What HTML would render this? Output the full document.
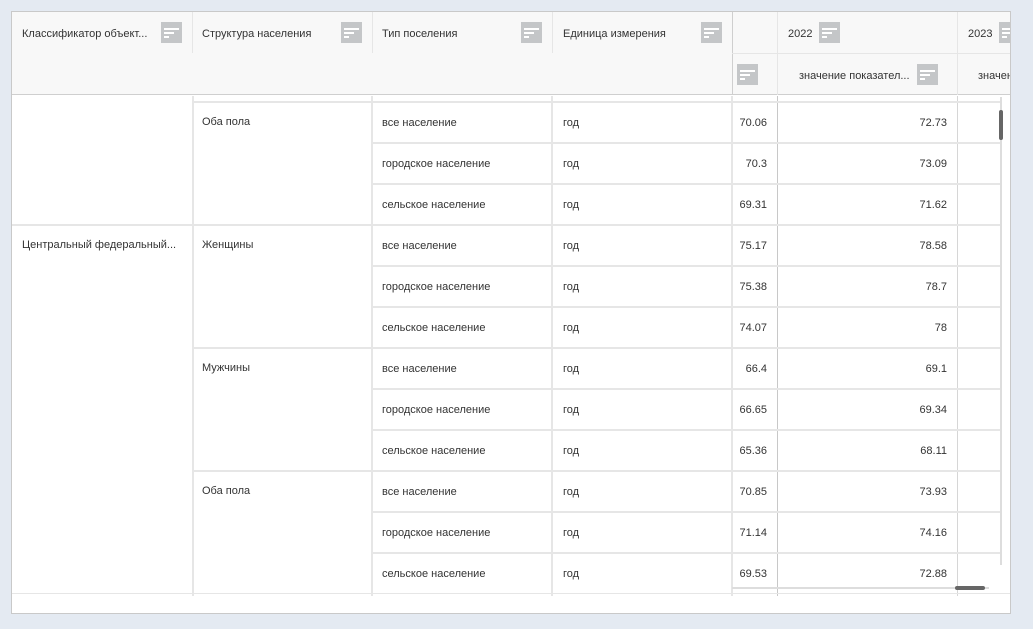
<!DOCTYPE html>
<html><head><meta charset="utf-8"><style>
*{margin:0;padding:0;box-sizing:border-box}
body{width:1033px;height:629px;background:#e4eaf2;position:relative;overflow:hidden;font-family:"Liberation Sans",Arial,sans-serif;font-size:11px;color:#333}
.a{position:absolute}
.panel{left:11px;top:11px;width:1000px;height:603px;background:#fff;border:1px solid #c9c9c9}
.hdr{left:12px;top:12px;width:998px;height:83px;background:#f8f8f8;border-bottom:1px solid #cfcfcf}
.h{position:absolute;height:1px;background:#e6e6e6}
.v{position:absolute;width:1px;background:#e6e6e6}
.ic{position:absolute;width:21px;height:21px;background:#c4c6c8}
.ic i{position:absolute;left:3px;height:2px;background:#fff}
.t{position:absolute;white-space:nowrap;line-height:13px;margin-top:1px}
.r{text-align:right}
</style></head><body>
<div class="a panel"></div>
<div class="a hdr"></div>
<div class="v" style="left:192px;top:12px;height:41px"></div>
<div class="v" style="left:372px;top:12px;height:41px"></div>
<div class="v" style="left:552px;top:12px;height:41px"></div>
<div class="v" style="left:732px;top:12px;height:83px;background:#cfcfcf"></div>
<div class="v" style="left:777px;top:12px;height:83px"></div>
<div class="v" style="left:957px;top:12px;height:83px"></div>
<div class="h" style="left:732px;top:53px;width:278px"></div>
<div class="t" style="left:22px;top:27px">Классификатор объект...</div>
<div class="t" style="left:202px;top:27px">Структура населения</div>
<div class="t" style="left:382px;top:27px">Тип поселения</div>
<div class="t" style="left:563px;top:27px">Единица измерения</div>
<div class="t" style="left:788px;top:27px">2022</div>
<div class="t" style="left:968px;top:27px">2023</div>
<div class="t" style="left:799px;top:69px">значение показател...</div>
<div class="t" style="left:978px;top:69px;width:32px;overflow:hidden">значение</div>
<div class="ic" style="left:161px;top:22px"><i style="top:6px;width:15px"></i><i style="top:10px;width:10px"></i><i style="top:14px;width:5px"></i></div>
<div class="ic" style="left:341px;top:22px"><i style="top:6px;width:15px"></i><i style="top:10px;width:10px"></i><i style="top:14px;width:5px"></i></div>
<div class="ic" style="left:521px;top:22px"><i style="top:6px;width:15px"></i><i style="top:10px;width:10px"></i><i style="top:14px;width:5px"></i></div>
<div class="ic" style="left:701px;top:22px"><i style="top:6px;width:15px"></i><i style="top:10px;width:10px"></i><i style="top:14px;width:5px"></i></div>
<div class="ic" style="left:819px;top:22px"><i style="top:6px;width:15px"></i><i style="top:10px;width:10px"></i><i style="top:14px;width:5px"></i></div>
<div class="ic" style="left:999px;top:22px;width:11px"><i style="top:6px;width:8px"></i><i style="top:10px;width:8px"></i><i style="top:14px;width:5px"></i></div>
<div class="ic" style="left:737px;top:64px"><i style="top:6px;width:15px"></i><i style="top:10px;width:10px"></i><i style="top:14px;width:5px"></i></div>
<div class="ic" style="left:917px;top:64px"><i style="top:6px;width:15px"></i><i style="top:10px;width:10px"></i><i style="top:14px;width:5px"></i></div>
<div class="v" style="left:192px;top:96px;height:500px;width:2px"></div>
<div class="v" style="left:371px;top:96px;height:500px;width:2px"></div>
<div class="v" style="left:551px;top:96px;height:500px;width:2px"></div>
<div class="v" style="left:731px;top:96px;height:500px;width:2px"></div>
<div class="v" style="left:777px;top:96px;height:500px;background:#c8c8c8"></div>
<div class="v" style="left:957px;top:96px;height:500px;background:#d6d6d6"></div>
<div class="h" style="left:192px;top:101px;width:808px;height:2px"></div>
<div class="h" style="left:372px;top:142px;width:628px;height:2px"></div>
<div class="h" style="left:372px;top:183px;width:628px;height:2px"></div>
<div class="h" style="left:12px;top:224px;width:988px;height:2px"></div>
<div class="h" style="left:372px;top:265px;width:628px;height:2px"></div>
<div class="h" style="left:372px;top:306px;width:628px;height:2px"></div>
<div class="h" style="left:192px;top:347px;width:808px;height:2px"></div>
<div class="h" style="left:372px;top:388px;width:628px;height:2px"></div>
<div class="h" style="left:372px;top:429px;width:628px;height:2px"></div>
<div class="h" style="left:192px;top:470px;width:808px;height:2px"></div>
<div class="h" style="left:372px;top:511px;width:628px;height:2px"></div>
<div class="h" style="left:372px;top:552px;width:628px;height:2px"></div>
<div class="h" style="left:12px;top:593px;width:998px;height:1px"></div>
<div class="t" style="left:22px;top:238px">Центральный федеральный...</div>
<div class="t" style="left:202px;top:115px">Оба пола</div>
<div class="t" style="left:202px;top:238px">Женщины</div>
<div class="t" style="left:202px;top:361px">Мужчины</div>
<div class="t" style="left:202px;top:484px">Оба пола</div>
<div class="t" style="left:382px;top:116px">все население</div>
<div class="t" style="left:382px;top:157px">городское население</div>
<div class="t" style="left:382px;top:198px">сельское население</div>
<div class="t" style="left:382px;top:239px">все население</div>
<div class="t" style="left:382px;top:280px">городское население</div>
<div class="t" style="left:382px;top:321px">сельское население</div>
<div class="t" style="left:382px;top:362px">все население</div>
<div class="t" style="left:382px;top:403px">городское население</div>
<div class="t" style="left:382px;top:444px">сельское население</div>
<div class="t" style="left:382px;top:485px">все население</div>
<div class="t" style="left:382px;top:526px">городское население</div>
<div class="t" style="left:382px;top:567px">сельское население</div>
<div class="t" style="left:563px;top:116px">год</div>
<div class="t" style="left:563px;top:157px">год</div>
<div class="t" style="left:563px;top:198px">год</div>
<div class="t" style="left:563px;top:239px">год</div>
<div class="t" style="left:563px;top:280px">год</div>
<div class="t" style="left:563px;top:321px">год</div>
<div class="t" style="left:563px;top:362px">год</div>
<div class="t" style="left:563px;top:403px">год</div>
<div class="t" style="left:563px;top:444px">год</div>
<div class="t" style="left:563px;top:485px">год</div>
<div class="t" style="left:563px;top:526px">год</div>
<div class="t" style="left:563px;top:567px">год</div>
<div class="t r" style="left:700px;width:67px;top:116px">70.06</div>
<div class="t r" style="left:700px;width:67px;top:157px">70.3</div>
<div class="t r" style="left:700px;width:67px;top:198px">69.31</div>
<div class="t r" style="left:700px;width:67px;top:239px">75.17</div>
<div class="t r" style="left:700px;width:67px;top:280px">75.38</div>
<div class="t r" style="left:700px;width:67px;top:321px">74.07</div>
<div class="t r" style="left:700px;width:67px;top:362px">66.4</div>
<div class="t r" style="left:700px;width:67px;top:403px">66.65</div>
<div class="t r" style="left:700px;width:67px;top:444px">65.36</div>
<div class="t r" style="left:700px;width:67px;top:485px">70.85</div>
<div class="t r" style="left:700px;width:67px;top:526px">71.14</div>
<div class="t r" style="left:700px;width:67px;top:567px">69.53</div>
<div class="t r" style="left:800px;width:147px;top:116px">72.73</div>
<div class="t r" style="left:800px;width:147px;top:157px">73.09</div>
<div class="t r" style="left:800px;width:147px;top:198px">71.62</div>
<div class="t r" style="left:800px;width:147px;top:239px">78.58</div>
<div class="t r" style="left:800px;width:147px;top:280px">78.7</div>
<div class="t r" style="left:800px;width:147px;top:321px">78</div>
<div class="t r" style="left:800px;width:147px;top:362px">69.1</div>
<div class="t r" style="left:800px;width:147px;top:403px">69.34</div>
<div class="t r" style="left:800px;width:147px;top:444px">68.11</div>
<div class="t r" style="left:800px;width:147px;top:485px">73.93</div>
<div class="t r" style="left:800px;width:147px;top:526px">74.16</div>
<div class="t r" style="left:800px;width:147px;top:567px">72.88</div>
<div class="a" style="left:1000px;top:97px;width:2px;height:468px;background:#ddd"></div>
<div class="a" style="left:999px;top:110px;width:4px;height:30px;background:#666;border-radius:2px"></div>
<div class="a" style="left:732px;top:587px;width:257px;height:2px;background:#ddd"></div>
<div class="a" style="left:955px;top:586px;width:30px;height:4px;background:#666;border-radius:2px"></div>
</body></html>
